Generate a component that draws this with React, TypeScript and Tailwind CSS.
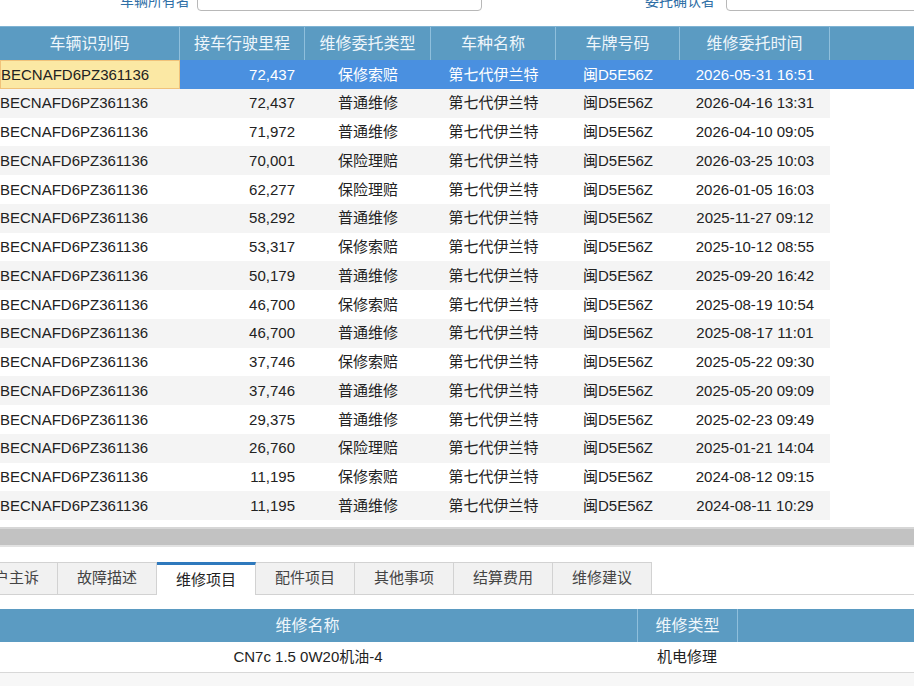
import React from "react"

const rows = [
  ["72,437", "保修索赔", "2026-05-31 16:51"],
  ["72,437", "普通维修", "2026-04-16 13:31"],
  ["71,972", "普通维修", "2026-04-10 09:05"],
  ["70,001", "保险理赔", "2026-03-25 10:03"],
  ["62,277", "保险理赔", "2026-01-05 16:03"],
  ["58,292", "普通维修", "2025-11-27 09:12"],
  ["53,317", "保修索赔", "2025-10-12 08:55"],
  ["50,179", "普通维修", "2025-09-20 16:42"],
  ["46,700", "保修索赔", "2025-08-19 10:54"],
  ["46,700", "普通维修", "2025-08-17 11:01"],
  ["37,746", "保修索赔", "2025-05-22 09:30"],
  ["37,746", "普通维修", "2025-05-20 09:09"],
  ["29,375", "普通维修", "2025-02-23 09:49"],
  ["26,760", "保险理赔", "2025-01-21 14:04"],
  ["11,195", "保修索赔", "2024-08-12 09:15"],
  ["11,195", "普通维修", "2024-08-11 10:29"],
]

const tabs = ["户主诉", "故障描述", "维修项目", "配件项目", "其他事项", "结算费用", "维修建议"]

const font = { fontFamily: '"Liberation Sans", "Noto Sans CJK SC", sans-serif' }

export default function App() {
  return (
    <div className="w-[914px] h-[686px] overflow-hidden bg-white text-[#222]" style={font}>
      {/* filter bar (scrolled, only bottom visible) */}
      <div className="h-[26px] overflow-hidden">
        <div className="flex items-center h-[26px] -mt-[15px]">
          <span className="w-[120px] shrink-0" />
          <span className="w-[77px] shrink-0 pt-[6px] text-[14px] text-[#2f6fa6] leading-none whitespace-nowrap">车辆所有者</span>
          <div className="w-[285px] shrink-0 h-[26px] border border-[#b8b8b8] rounded-[4px] bg-white" />
          <span className="w-[163px] shrink-0" />
          <span className="w-[81px] shrink-0 pt-[6px] text-[14px] text-[#2f6fa6] leading-none whitespace-nowrap">委托确认者</span>
          <div className="w-[200px] shrink-0 h-[26px] border border-[#b8b8b8] rounded-[4px] bg-white" />
        </div>
      </div>

      {/* main grid */}
      <div className="flex h-[34px] bg-[#5b9bc2] text-[#eef6fb] text-[16px] border-t border-[#7fb3d3]">
        <div className="w-[180px] flex items-center justify-center border-r border-[#8fbfdc]">车辆识别码</div>
        <div className="w-[125px] flex items-center justify-center border-r border-[#8fbfdc]">接车行驶里程</div>
        <div className="w-[126px] flex items-center justify-center border-r border-[#8fbfdc]">维修委托类型</div>
        <div className="w-[125px] flex items-center justify-center border-r border-[#8fbfdc]">车种名称</div>
        <div className="w-[124px] flex items-center justify-center border-r border-[#8fbfdc]">车牌号码</div>
        <div className="w-[150px] flex items-center justify-center border-r border-[#8fbfdc]">维修委托时间</div>
        <div className="flex-1" />
      </div>
      <div className="h-[461px]">
        {rows.map((r, i) => {
          const sel = i === 0
          return (
            <div
              key={i}
              className={`flex h-[28.75px] items-center text-[15px] ${
                sel ? "bg-[#4a90e0] text-white" : i % 2 === 1 ? "bg-[#f4f4f4]" : "bg-white"
              }`}
            >
              <div
                className={`w-[180px] h-full flex items-center pt-px ${
                  sel ? "bg-[#fbe8a4] text-[#222] border border-[#f0c27a]" : ""
                }`}
              >
                BECNAFD6PZ361136
              </div>
              <div className="w-[125px] text-right pr-[10px] pt-px">{r[0]}</div>
              <div className="w-[126px] text-center pt-px">{r[1]}</div>
              <div className="w-[125px] text-center pt-px">第七代伊兰特</div>
              <div className="w-[124px] text-center pt-px">闽D5E56Z</div>
              <div className="w-[150px] text-center pt-px">{r[2]}</div>
              <div className={`flex-1 h-full ${sel ? "" : "bg-white"}`} />
            </div>
          )
        })}
      </div>

      {/* horizontal scrollbar */}
      <div className="mt-[6px] h-[20px] bg-[#c2c2c2] border-t-2 border-[#d6d6d6] border-b-2 border-b-[#e2e2e2]" />

      {/* tabs */}
      <div className="mt-[15px] flex h-[33px] items-end border-b border-[#d2d2d2]">
        {tabs.map((t, i) => {
          const active = i === 2
          return (
            <div
              key={t}
              className={`h-[32px] flex items-center text-[15px] whitespace-nowrap overflow-hidden border-r border-[#d2d2d2] ${
                i === 0 ? "w-[58px] justify-end pr-[18px]" : "w-[99px] justify-center"
              } ${
                active
                  ? "bg-white border-t-[3px] border-t-[#2f79bd] h-[33px] -mb-px text-[#222]"
                  : "bg-[#f1f1f1] border-t border-t-[#d2d2d2] text-[#444]"
              }`}
            >
              <span className="shrink-0">{t}</span>
            </div>
          )
        })}
      </div>

      {/* detail grid */}
      <div className="mt-[14px] flex h-[33px] bg-[#5b9bc2] text-[#eef6fb] text-[16px]">
        <div className="w-[638px] flex items-center justify-center pr-[22px] border-r border-[#8fbfdc]">维修名称</div>
        <div className="w-[100px] flex items-center justify-center border-r border-[#8fbfdc]">维修类型</div>
        <div className="flex-1" />
      </div>
      <div className="flex h-[31px] items-center text-[15px] border-b border-[#d8d8d8]">
        <div className="w-[638px] text-center pr-[22px]">CN7c 1.5 0W20机油-4</div>
        <div className="w-[100px] pl-[19px]">机电修理</div>
      </div>
      <div className="h-[20px] bg-[#f7f7f7]" />
    </div>
  )
}
